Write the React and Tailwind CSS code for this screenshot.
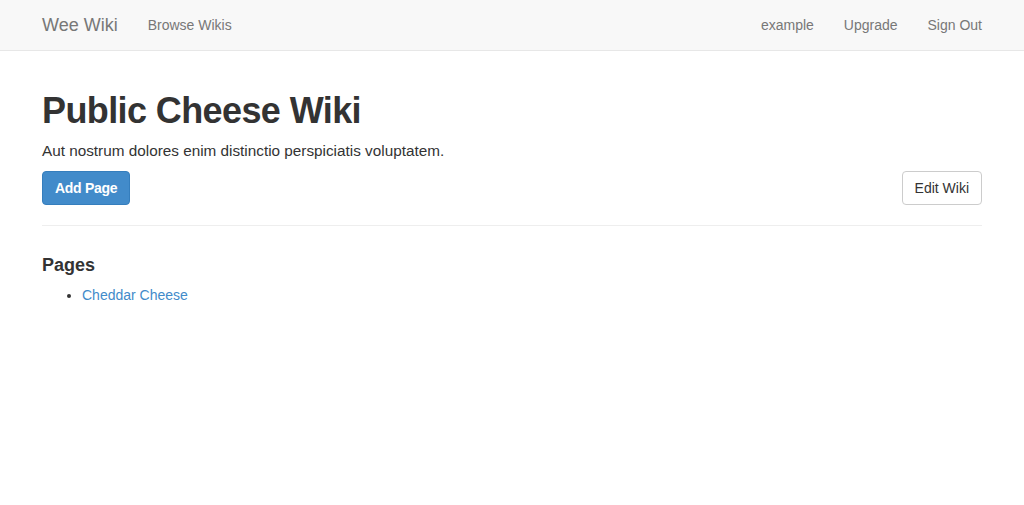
export default function App() {
  const font = { fontFamily: '"Liberation Sans", Arial, sans-serif' }
  return (
    <div className="min-h-[505px] bg-white text-[#333] text-[14px] leading-[20px]" style={font}>
      <nav className="h-[51px] bg-[#f8f8f8] border-b border-[#e7e7e7]">
        <div className="max-w-[970px] mx-auto px-[15px] h-[50px] flex items-center justify-between">
          <div className="flex items-center -ml-[15px]">
            <a className="px-[15px] py-[15px] text-[18px] leading-[20px] text-[#777]">Wee Wiki</a>
            <a className="px-[15px] py-[15px] text-[#777]">Browse Wikis</a>
          </div>
          <div className="flex items-center -mr-[15px]">
            <a className="px-[15px] py-[15px] text-[#777]">example</a>
            <a className="px-[15px] py-[15px] text-[#777]">Upgrade</a>
            <a className="px-[15px] py-[15px] text-[#777]">Sign Out</a>
          </div>
        </div>
      </nav>

      <main className="max-w-[970px] mx-auto px-[15px] pt-[20px]">
        <h1 className="mt-[20px] mb-[10px] text-[36px] leading-[39.6px] font-bold tracking-[-0.6px]">
          Public Cheese Wiki
        </h1>
        <p className="mb-[10px] text-[15.3px]">Aut nostrum dolores enim distinctio perspiciatis voluptatem.</p>
        <div className="flex items-center justify-between">
          <button className="px-[12px] py-[6px] rounded-[4px] border border-[#357ebd] bg-[#428bca] text-white font-bold tracking-[-0.3px] leading-[20px]">
            Add Page
          </button>
          <button className="px-[12px] py-[6px] rounded-[4px] border border-[#ccc] bg-white text-[#333] leading-[20px]">
            Edit Wiki
          </button>
        </div>
        <hr className="mt-[20px] mb-[30px] border-t border-[#eee]" />
        <h4 className="mb-[10px] text-[18px] leading-[19.8px] font-bold">Pages</h4>
        <ul className="list-disc pl-[40px]">
          <li>
            <a className="text-[#428bca]">Cheddar Cheese</a>
          </li>
        </ul>
      </main>
    </div>
  )
}
